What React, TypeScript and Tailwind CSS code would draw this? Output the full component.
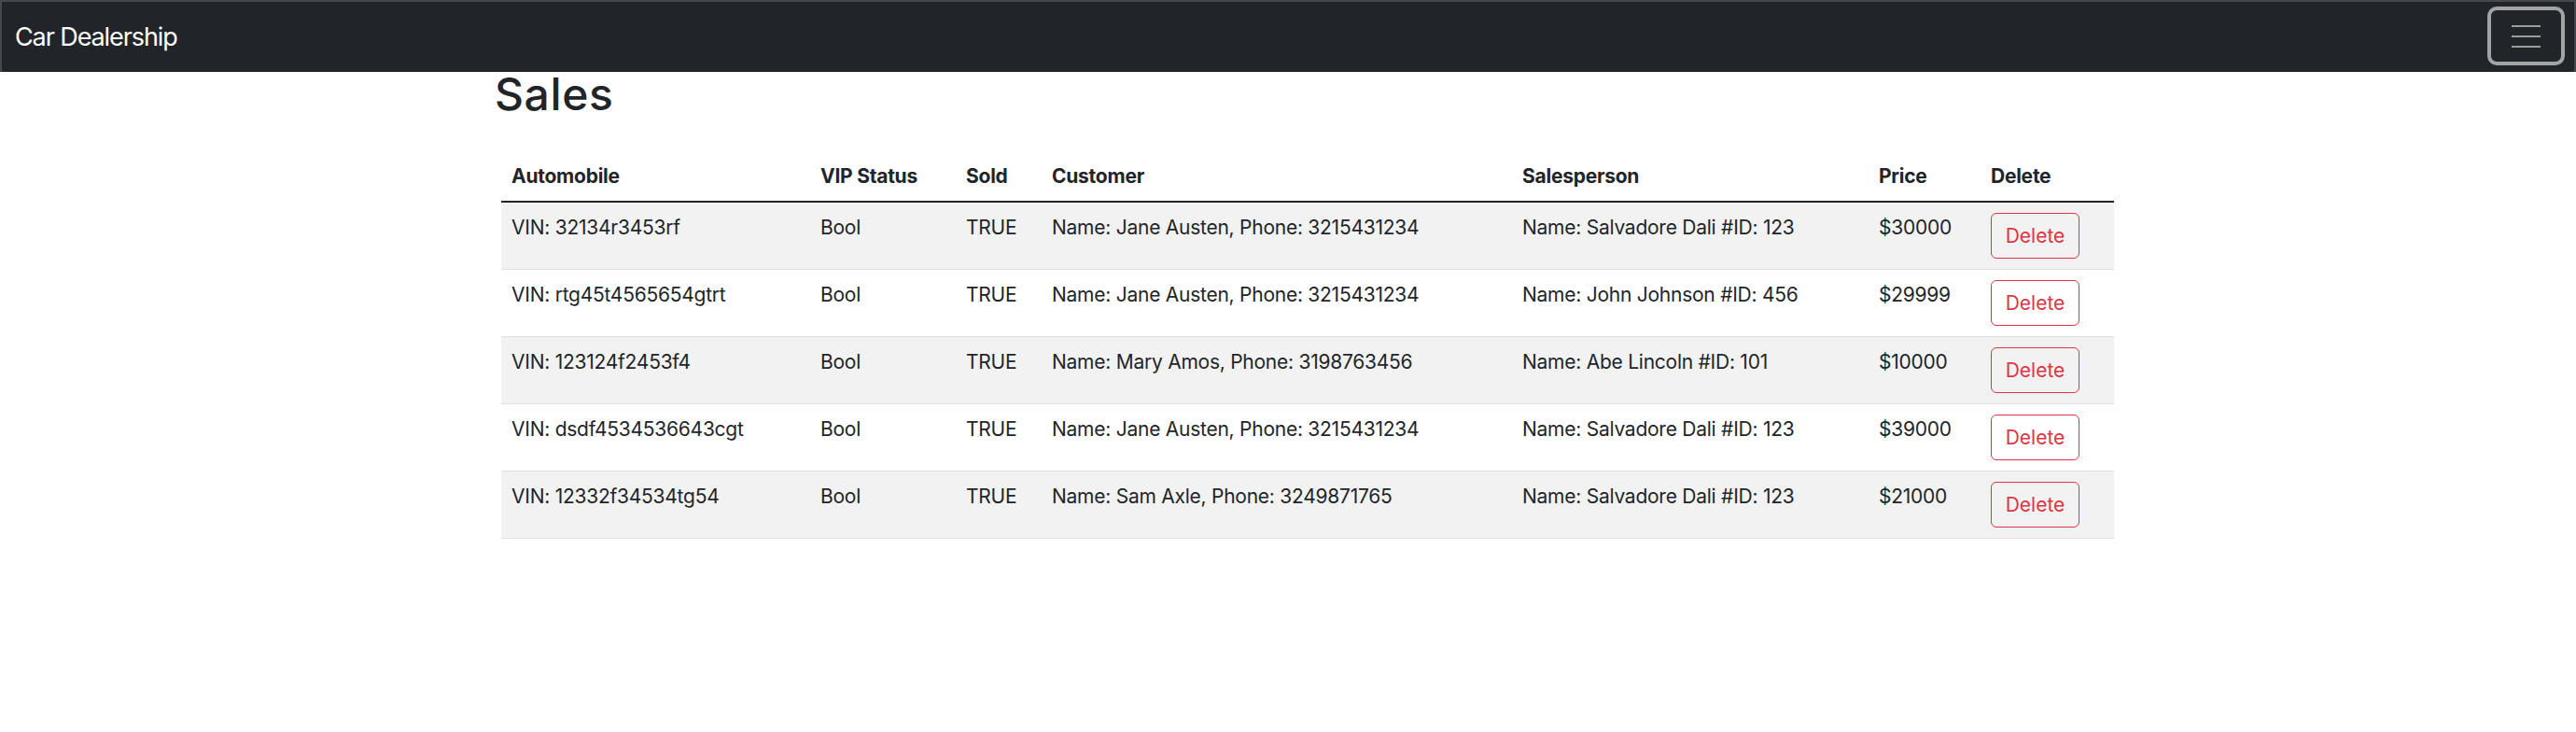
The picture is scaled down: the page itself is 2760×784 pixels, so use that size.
// App.tsx
import { useState } from "react";

type Sale = {
  id: number;
  vin: string;
  vip: string;
  sold: string;
  customer: string;
  salesperson: string;
  price: string;
};

const SALES: Sale[] = [
  { id: 1, vin: "32134r3453rf", vip: "Bool", sold: "TRUE", customer: "Name: Jane Austen, Phone: 3215431234", salesperson: "Name: Salvadore Dali #ID: 123", price: "$30000" },
  { id: 2, vin: "rtg45t4565654gtrt", vip: "Bool", sold: "TRUE", customer: "Name: Jane Austen, Phone: 3215431234", salesperson: "Name: John Johnson #ID: 456", price: "$29999" },
  { id: 3, vin: "123124f2453f4", vip: "Bool", sold: "TRUE", customer: "Name: Mary Amos, Phone: 3198763456", salesperson: "Name: Abe Lincoln #ID: 101", price: "$10000" },
  { id: 4, vin: "dsdf4534536643cgt", vip: "Bool", sold: "TRUE", customer: "Name: Jane Austen, Phone: 3215431234", salesperson: "Name: Salvadore Dali #ID: 123", price: "$39000" },
  { id: 5, vin: "12332f34534tg54", vip: "Bool", sold: "TRUE", customer: "Name: Sam Axle, Phone: 3249871765", salesperson: "Name: Salvadore Dali #ID: 123", price: "$21000" },
];

const HEADERS = ["Automobile", "VIP Status", "Sold", "Customer", "Salesperson", "Price", "Delete"];

function Nav() {
  return (
    <nav className="flex h-[77px] items-center justify-between border-x-2 border-t-2 border-[#45484c] bg-[#212529] pl-[14px] pr-[10px]">
      <a href="/" className="text-[27px] leading-none tracking-[-1.1px] text-white">
        Car Dealership
      </a>
      {/* Toggler (Bootstrap navbar-dark, mit Fokus-Ring) */}
      <button className="mb-[2px] flex h-[63px] w-[83px] flex-col items-center justify-center gap-[9px] rounded-[10px] border-[4px] border-[#a2a3a5]">
        <span className="h-[2px] w-[31px] bg-[#9a9b9d]" />
        <span className="h-[2px] w-[31px] bg-[#9a9b9d]" />
        <span className="h-[2px] w-[31px] bg-[#9a9b9d]" />
      </button>
    </nav>
  );
}

export default function App() {
  const [sales, setSales] = useState<Sale[]>(SALES);

  return (
    <div className="min-h-[784px] bg-white font-['Inter',sans-serif] text-[#212529]">
      <Nav />

      <main className="ml-[530px] w-[1735px]">
        <h1 className="text-[48px] font-medium leading-none tracking-[0.6px]">Sales</h1>

        <table className="ml-[7px] mt-[37px] w-[1728px] table-fixed border-collapse text-left text-[21px] tracking-[-0.25px]">
          <colgroup>
            <col className="w-[331px]" />
            <col className="w-[156px]" />
            <col className="w-[92px]" />
            <col className="w-[504px]" />
            <col className="w-[382px]" />
            <col className="w-[120px]" />
            <col className="w-[143px]" />
          </colgroup>
          <thead>
            <tr>
              {HEADERS.map((h) => (
                <th key={h} className="border-b-2 border-[#212529] px-[11px] py-[11px] font-bold leading-[31px]">
                  {h}
                </th>
              ))}
            </tr>
          </thead>
          <tbody>
            {sales.map((s, i) => (
              <tr key={s.id} className={i % 2 === 0 ? "bg-[#f2f2f2]" : "bg-white"}>
                <td className="border-b border-[#dee2e6] px-[11px] py-[11px] align-top leading-[31px]">VIN: {s.vin}</td>
                <td className="border-b border-[#dee2e6] px-[11px] py-[11px] align-top leading-[31px]">{s.vip}</td>
                <td className="border-b border-[#dee2e6] px-[11px] py-[11px] align-top leading-[31px]">{s.sold}</td>
                <td className="border-b border-[#dee2e6] px-[11px] py-[11px] align-top leading-[31px]">{s.customer}</td>
                <td className="border-b border-[#dee2e6] px-[11px] py-[11px] align-top leading-[31px]">{s.salesperson}</td>
                <td className="border-b border-[#dee2e6] px-[11px] py-[11px] align-top leading-[31px]">{s.price}</td>
                <td className="border-b border-[#dee2e6] px-[11px] py-[11px] align-top leading-[31px]">
                  <button
                    onClick={() => setSales((prev) => prev.filter((x) => x.id !== s.id))}
                    className="flex h-[49px] w-[95px] items-center justify-center rounded-[6px] border border-[#dc3545] text-[21px] tracking-normal text-[#dc3545]"
                  >
                    Delete
                  </button>
                </td>
              </tr>
            ))}
          </tbody>
        </table>
      </main>
    </div>
  );
}
